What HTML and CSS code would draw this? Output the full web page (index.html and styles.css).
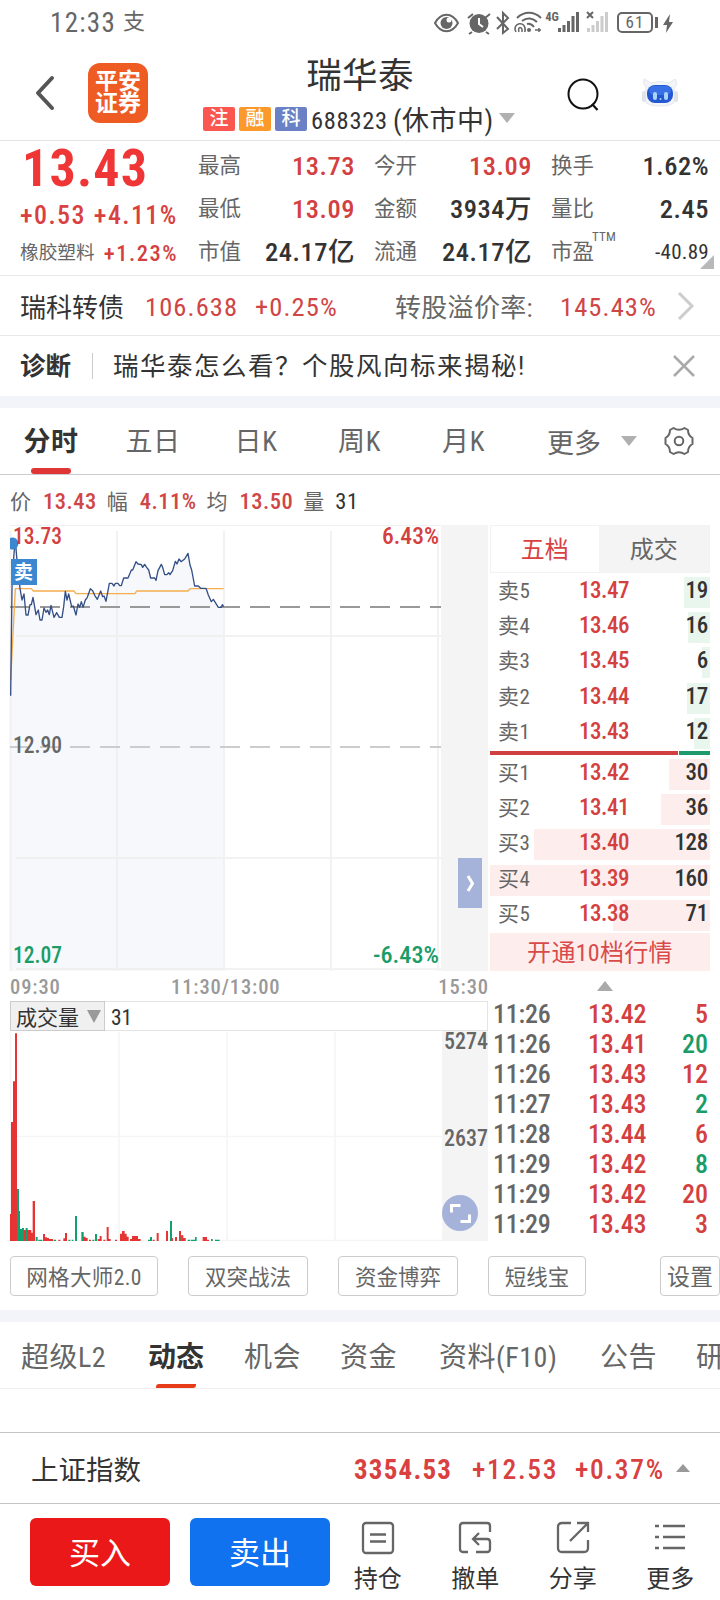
FILE: index.html
```html
<!DOCTYPE html>
<html lang="zh-CN">
<head>
    <meta charset="UTF-8">
    <meta name="viewport" content="width=device-width, initial-scale=1.0">
    <title>瑞华泰 688323</title>
    <link rel="stylesheet" href="styles.css">
</head>
<body>
<div class="page">

    <div class="status">
        <span class="clock">12:33</span>
        <span class="pay">支</span>
        <svg class="status-icons" width="250" height="46" viewBox="0 0 250 46">
            <g fill="none" stroke="#666" stroke-width="2">
                <path d="M5 23C11 12 22 12 28 23C22 34 11 34 5 23Z"/>
                <path d="M60 14l-5 4M38 18l5-4M42 32l-3 2M56 32l3 2"/>
                <path d="M67 17l11 12-5 4V13l5 5-11 11"/>
                <path d="M87 18C94 11 104 11 111 18M92 21C97 17 103 18 107 22"/>
                <path d="M86 32C81 23 97 19 95 32M89 32C87 26 93 26 92 32" stroke-width="1.5"/>
                <path d="M97 24Q101 23 104 27" />
                <path d="M105 30h6M109 28v4" stroke-width="1.5"/>
                <rect x="188" y="13" width="34" height="19" rx="4"/>
                <path d="M226.500 17v11" stroke-width="3"/>
                <path d="M157 12l6 6M163 12l-6 6"/>
            </g>
            <g fill="#666">
                <circle cx="16.500" cy="23" r="6"/>
                <circle cx="49" cy="23.500" r="9.500"/>
                <circle cx="99" cy="30" r="2"/>
                <path d="M128 28h3v4h-3zM132.500 25h3v7h-3zM137 21h3v11h-3zM141.500 16h3v16h-3zM146 12h3v20h-3z"/>
                <path d="M240 14l-7 11h4l-1 8 7-11h-4z"/>
            </g>
            <path fill="#ccc" d="M157 28h3v4h-3zM161.500 25h3v7h-3zM166 21h3v11h-3zM170.500 16h3v16h-3zM175 12h3v20h-3z"/>
            <circle cx="19" cy="20" r="2.500" fill="#fff"/>
            <path d="M49 18v6l4 3" fill="none" stroke="#fff" stroke-width="2"/>
            <text class="net" x="122" y="21">4G</text>
            <text class="battery" x="205" y="28">61</text>
        </svg>
    </div>

    <div class="header">
        <svg class="back" width="22" height="38" viewBox="0 0 22 38"><path d="M18 4L4 19l14 15" fill="none" stroke="#555" stroke-width="4" stroke-linecap="round" stroke-linejoin="round"/></svg>
        <div class="logo"><span>平安</span><span>证券</span></div>
        <div class="title">
            <div class="name">瑞华泰</div>
            <div class="code">
                <span class="tag tag-reg">注</span>
                <span class="tag tag-margin">融</span>
                <span class="tag tag-sci">科</span>
                <span class="num">688323</span>
                <span class="state">(休市中)</span>
                <i class="down"></i>
            </div>
        </div>
        <svg class="search" width="34" height="36" viewBox="0 0 34 36"><circle cx="16" cy="16" r="14.500" fill="none" stroke="#111" stroke-width="2"/><path d="M25 26l5.500 6" stroke="#111" stroke-width="2.200"/></svg>
        <svg class="robot" width="38" height="32" viewBox="0 0 38 32">
            <path d="M5 10Q1 7 3 2L10 6Q19 3 28 6L34 2Q38 8 33 11L34 24Q32 29 19 29T4 24Z" fill="#f3f4f7" stroke="#e6e8ed"/>
            <rect x="1" y="14" width="4" height="11" rx="2" fill="#e0e3ea"/><rect x="33" y="14" width="4" height="11" rx="2" fill="#e0e3ea"/>
            <rect x="6" y="8" width="26" height="18" rx="8" fill="#2458d3"/>
            <rect x="8" y="9" width="22" height="9" rx="5" fill="#3a70e6"/>
            <rect x="12" y="15" width="4" height="8" rx="2" fill="#a9d4fb"/><rect x="23" y="15" width="4" height="8" rx="2" fill="#a9d4fb"/><circle cx="19.500" cy="22" r="1" fill="#a9d4fb"/>
        </svg>
    </div>

    <div class="quote">
        <div class="last">
            <div class="price">13.43</div>
            <div class="change"><span>+0.53</span><span>+4.11%</span></div>
            <div class="sector"><span>橡胶塑料</span><b>+1.23%</b></div>
        </div>
        <dl class="stats">
            <dt>最高</dt><dd class="red">13.73</dd><dt>今开</dt><dd class="red">13.09</dd><dt>换手</dt><dd>1.62%</dd>
            <dt>最低</dt><dd class="red">13.09</dd><dt>金额</dt><dd>3934万</dd><dt>量比</dt><dd>2.45</dd>
            <dt>市值</dt><dd>24.17亿</dd><dt>流通</dt><dd>24.17亿</dd><dt>市盈<sup>TTM</sup></dt><dd class="small">-40.89</dd>
        </dl>
        <i class="corner"></i>
    </div>

    <div class="bond">
        <span class="bond-name">瑞科转债</span>
        <span class="bond-num">106.638</span>
        <span class="bond-num">+0.25%</span>
        <span class="bond-label">转股溢价率:</span>
        <span class="bond-num">145.43%</span>
        <svg width="18" height="30" viewBox="0 0 18 30"><path d="M2 2l13 13L2 28" fill="none" stroke="#ccc" stroke-width="3"/></svg>
    </div>

    <div class="tip">
        <b>诊断</b>
        <span class="tip-text">瑞华泰怎么看？个股风向标来揭秘!</span>
        <svg width="22" height="22" viewBox="0 0 22 22"><path d="M1 1l20 20M21 1L1 21" stroke="#aaa" stroke-width="2.500"/></svg>
    </div>

    <div class="band"></div>

    <div class="tabs">
        <span class="tab active">分时</span>
        <span class="tab">五日</span>
        <span class="tab">日K</span>
        <span class="tab">周K</span>
        <span class="tab">月K</span>
        <span class="tab-more">更多 <i class="down"></i></span>
        <svg width="30" height="30" viewBox="0 0 30 30"><g fill="none" stroke="#666" stroke-width="2"><path d="M9.500 2Q15 5.500 20.500 2L24 4Q24 9.500 28.500 12V18Q24 20.500 24 26L20.500 28Q15 24.500 9.500 28L6 26Q6 20.500 1.500 18V12Q6 9.500 6 4Z" stroke-linejoin="round"/><circle cx="15" cy="15" r="4.300"/></g></svg>
    </div>

    <div class="info">
        <span>价</span><b>13.43</b><span>幅</span><b>4.11%</b><span>均</span><b>13.50</b><span>量</span><b class="dark">31</b>
    </div>

    <div class="board">
        <div class="charts">
            <svg class="trend" width="478" height="446" viewBox="0 0 478 446">
                <rect x="431" width="47" height="446" fill="#f4f4f4"/>
                <path d="M0 .5h431" stroke="#f0f0f0"/>
                <g transform="translate(-10 -5) scale(.33333)" fill="none" stroke-width="3.500">
                    <path fill="#f6f8fb" d="M32 527L36 200 42 100 46 60 50 110 60 205 66 240 72 222 78 285 84 285 90 254 99 232 108 284 115 270 120 300 126 300 132 264 148 284 153 256 162 292 170 278 178 292 186 292 196 214 206 222 215 260 228 285 234 252 249 262 271 206 292 238 302 213 318 244 328 190 364 197 371 174 384 174 408 125 434 133 446 150 452 174 468 181 474 152 484 133 494 164 518 152 526 124 564 100 584 198 618 205 634 245 655 262 671 260V1353H32Z"/>
                </g>
                <path d="M.5 6v440M107 6v440M214 6v440M321 6v440M428 6v440M6 111h425M6 333h425M6 444h425" stroke="#eee" stroke-width="2" opacity=".75"/>
                <path d="M0 82h431" stroke="#999" stroke-width="2" stroke-dasharray="20 10"/>
                <path d="M0 222h431" stroke="#ccc" stroke-width="2" stroke-dasharray="20 10"/>
                <g transform="translate(-10 -5) scale(.33333)" fill="none" stroke-width="4" stroke-linejoin="round">
                    <path stroke="#f5ad4e" d="M32 480L46 206H94L100 213H222L228 221H405L410 213H564L570 206H671"/>
                    <path stroke="#344f86" d="M32 527L36 200 42 100 46 60 50 110 60 205 66 240 72 222 78 285 84 285 90 254 94 254 99 232 108 284 115 270 120 300 126 300 132 264 138 277 143 270 148 284 153 256 162 292 170 278 178 292 186 292 191 260 196 214 201 240 206 222 215 260 220 258 228 285 234 252 239 262 244 245 249 262 256 240 262 232 271 206 278 212 284 226 292 238 302 213 308 230 312 228 318 244 328 190 336 190 342 198 346 190 354 190 359 197 364 197 371 174 384 174 390 160 394 150 398 150 408 125 414 132 424 134 428 142 434 133 440 142 446 150 452 174 464 174 468 181 474 152 484 133 488 142 494 164 500 164 506 158 510 164 518 152 526 124 531 132 537 117 543 125 554 117 564 100 570 135 575 150 584 198 595 198 602 205 618 205 625 225 634 245 640 238 655 262 664 262 667 254 671 260"/>
                </g>
                <path d="M0 13a6 6 0 1 1 0 11z" fill="#3b87d0"/>
                <rect x="1" y="34" width="26" height="26" fill="#3b87d0"/>
                <text class="sell-mark" x="4" y="54">卖</text>
                <text class="axis red" x="3" y="19" textLength="49" lengthAdjust="spacingAndGlyphs">13.73</text>
                <text class="axis red" x="372" y="19" textLength="57" lengthAdjust="spacingAndGlyphs">6.43%</text>
                <text class="axis" x="3" y="228" textLength="49" lengthAdjust="spacingAndGlyphs">12.90</text>
                <text class="axis green" x="3" y="438" textLength="49" lengthAdjust="spacingAndGlyphs">12.07</text>
                <text class="axis green" x="363" y="438" textLength="66" lengthAdjust="spacingAndGlyphs">-6.43%</text>
                <rect x="448" y="333" width="24" height="50" fill="#a5b3da"/>
                <path d="M458 351l4.500 7.500-4.500 7.500" fill="none" stroke="#fff" stroke-width="3"/>
            </svg>
            <div class="times"><span>09:30</span><span>11:30/13:00</span><span>15:30</span></div>
            <div class="vol-head"><span class="vol-name">成交量 <i class="down"></i></span><span class="vol-now">31</span></div>
            <svg class="volume" width="478" height="210" viewBox="0 0 478 210">
                <rect x="432" width="46" height="210" fill="#f4f4f4"/>
                <path d="M.5 1v209M109 1v209M217 1v209M325 1v209M0 105.500h432M0 209.500h432" stroke="#f5f5f5" stroke-width="1.500"/>
                <g transform="translate(-10 -111) scale(.33333)">
                    <path fill="#e63434" d="M30 963V882H33V606H39V484H45V340H51V963ZM72 963V930H94V938H98V843H105V963ZM129 963V942H135V952H141V963ZM141 963V954H147V957H159V963ZM190 963V955H195V939H201V963ZM248 963V936H251V950H257V954H263V963ZM293 963V957H299V948H305V963ZM320 963V921H326V957H332V963ZM360 963V941H366V933H374V941H380V950H386V963ZM390 963V957H396V948H414V957H422V963ZM470 963V939H476V963ZM498 963V933H504V963ZM513 963V954H519V963ZM525 963V951H531V963ZM537 963V933H543V946H550V954H557V963ZM608 963V951H621V959H627V963ZM175 959h6v4h-6zM267 959h6v4h-6zM310 959h6v4h-6zM345 959h6v4h-6zM458 959h6v4h-6z"/>
                    <path fill="#12a06c" d="M51 963V807H57V873H60V927H66V924H72V963ZM77 963V924H83V963ZM107 963V951H113V963ZM161 959h7v4h-7zM205 959h6v4h-6zM225 963V888H231V963ZM244 963V936H249V963ZM285 963V942H291V963ZM450 963V951H456V963ZM510 963V903H516V963ZM542 963V951H546V963ZM563 959h8v4h-8zM585 963V951H590V963ZM573 959h12v4h-12zM633 957h5v6h-5zM645 959h14v4h-14zM115 959h12v4h-12zM215 959h5v4h-5zM277 959h6v4h-6zM444 959h6v4h-6z"/>
                </g>
                <text class="axis" x="434" y="18" textLength="44" lengthAdjust="spacingAndGlyphs">5274</text>
                <text class="axis" x="434" y="115" textLength="44" lengthAdjust="spacingAndGlyphs">2637</text>
                <circle cx="450" cy="182" r="18" fill="#a5b3da"/>
                <path d="M441.500 181.500v-7h9M459.500 183.500v7h-9" fill="none" stroke="#fff" stroke-width="3"/>
            </svg>
        </div>

        <div class="side">
            <div class="side-tabs"><span class="on">五档</span><span>成交</span></div>
            <div class="book">
                <div class="row sell"><i style="width:26px"></i><span>卖5</span><b>13.47</b><em>19</em></div>
                <div class="row sell"><i style="width:22px"></i><span>卖4</span><b>13.46</b><em>16</em></div>
                <div class="row sell"><i style="width:8px"></i><span>卖3</span><b>13.45</b><em>6</em></div>
                <div class="row sell"><i style="width:23px"></i><span>卖2</span><b>13.44</b><em>17</em></div>
                <div class="row sell"><i style="width:16px"></i><span>卖1</span><b>13.43</b><em>12</em></div>
            </div>
            <div class="ratio"><i></i><i></i></div>
            <div class="book">
                <div class="row"><i style="width:41px"></i><span>买1</span><b>13.42</b><em>30</em></div>
                <div class="row"><i style="width:49px"></i><span>买2</span><b>13.41</b><em>36</em></div>
                <div class="row"><i style="width:176px"></i><span>买3</span><b>13.40</b><em>128</em></div>
                <div class="row"><i style="width:220px"></i><span>买4</span><b>13.39</b><em>160</em></div>
                <div class="row"><i style="width:97px"></i><span>买5</span><b>13.38</b><em>71</em></div>
            </div>
            <div class="open">开通10档行情</div>
            <div class="fold"><i class="up"></i></div>
            <div class="ticks">
                <div><span>11:26</span><b>13.42</b><em class="red">5</em></div>
                <div><span>11:26</span><b>13.41</b><em class="green">20</em></div>
                <div><span>11:26</span><b>13.43</b><em class="red">12</em></div>
                <div><span>11:27</span><b>13.43</b><em class="green">2</em></div>
                <div><span>11:28</span><b>13.44</b><em class="red">6</em></div>
                <div><span>11:29</span><b>13.42</b><em class="green">8</em></div>
                <div><span>11:29</span><b>13.42</b><em class="red">20</em></div>
                <div><span>11:29</span><b>13.43</b><em class="red">3</em></div>
            </div>
        </div>
    </div>

    <div class="tools">
        <button class="w1">网格大师2.0</button>
        <button class="w2">双突战法</button>
        <button class="w2">资金博弈</button>
        <button class="w3">短线宝</button>
        <button class="set">设置</button>
    </div>

    <div class="band"></div>

    <div class="news-tabs">
        <span>超级L2</span>
        <span class="active">动态</span>
        <span>机会</span>
        <span>资金</span>
        <span>资料(F10)</span>
        <span>公告</span>
        <span>研</span>
    </div>
    <div class="blank"></div>

    <div class="index">
        <span class="index-name">上证指数</span>
        <b>3354.53</b>
        <span class="index-num">+12.53</span>
        <span class="index-num">+0.37%</span>
        <i class="up"></i>
    </div>

    <div class="bottom">
        <button class="buy">买入</button>
        <button class="sell-btn">卖出</button>
        <div class="nav">
            <div>
                <svg width="34" height="34" viewBox="0 0 34 34"><rect x="2" y="2" width="30" height="30" rx="3"/><path d="M9 13.500h16M9 20.500h16"/></svg>
                <span>持仓</span>
            </div>
            <div>
                <svg width="34" height="34" viewBox="0 0 34 34"><path d="M10 31H5Q2 31 2 28V5Q2 2 5 2H29Q32 2 32 5V11M16 18H29Q32 18 32 21V28Q32 31 29 31H18M21 12l-6 6 6 6"/></svg>
                <span>撤单</span>
            </div>
            <div>
                <svg width="34" height="34" viewBox="0 0 34 34"><path d="M15 2H6Q2 2 2 6V27Q2 31 6 31H28Q32 31 32 27V19M21 2H32V11M32 2L14 20"/></svg>
                <span>分享</span>
            </div>
            <div>
                <svg width="34" height="34" viewBox="0 0 34 34"><path d="M2 5h4M10 5h22M2 16h4M10 16h22M2 27h4M10 27h22"/></svg>
                <span>更多</span>
            </div>
        </div>
    </div>

</div>
</body>
</html>
```
FILE: styles.css
```css
*{
    box-sizing: border-box;
}

body{
    margin: 0;
    background-color: white;
    color: #333;
    font-family: Roboto, "Noto Sans CJK SC", sans-serif;
    font-stretch: 75%;
}

b, em, i{
    font-style: normal;
}

button{
    font-family: inherit;
    font-stretch: 75%;
    padding: 0;
}

.page{
    width: 720px;
    height: 1600px;
    overflow: hidden;
}

.red{
    color: #d43f3f;
    fill: #d43f3f;
}

.green{
    color: #1a9c68;
    fill: #1a9c68;
}

.down, .up{
    display: inline-block;
    border: 8px solid transparent;
    border-bottom: 0;
    border-top: 10px solid #b0b0b0;
}

.up{
    border-top: 0;
    border-bottom: 10px solid #aaa;
}

/* status bar */
.status{
    height: 46px;
    padding-left: 50px;
    display: flex;
    align-items: center;
    color: #666;
}

.clock{
    font-size: 27px;
    letter-spacing: 1.300px;
    width: 73px;
}

.pay{
    font-size: 22px;
    line-height: 40px;
    padding-bottom: 3px;
}

.status-icons{
    margin-left: auto;
    margin-right: 40px;
}

.net{
    font-size: 12.500px;
    font-weight: bold;
}

.net, .battery{
    fill: #666;
    text-anchor: middle;
}

.battery{
    font-size: 17px;
    letter-spacing: 1px;
}

/* header */
.header{
    height: 95px;
    display: flex;
    border-bottom: 1px solid #e4e4e4;
}

.back{
    margin: 28px 0 0 34px;
}

.logo{
    width: 60px;
    height: 60px;
    margin: 17px 0 0 32px;
    border-radius: 12px;
    background-color: #ee5c24;
    color: white;
    font-size: 23px;
    line-height: 22px;
    font-weight: bold;
    display: flex;
    flex-direction: column;
    align-items: center;
    justify-content: center;
}

.title{
    width: 316px;
    margin-left: 54px;
}

.name{
    font-size: 35.500px;
    line-height: 56px;
    height: 56px;
    text-align: center;
    padding-top: 2px;
    letter-spacing: .300px;
}

.code{
    display: flex;
    align-items: center;
    height: 32px;
    margin-left: 1px;
}

.tag{
    width: 32px;
    height: 24px;
    margin: 1px 4px 0 0;
    border-radius: 2px;
    color: white;
    font-size: 19px;
    line-height: 23px;
    text-align: center;
    font-weight: 500;
}

.tag-reg{
    background-color: #fb5750;
}

.tag-margin{
    background-color: #fb9a2b;
}

.tag-sci{
    background-color: #6a82c5;
}

.num{
    font-size: 24.500px;
    letter-spacing: .700px;
    padding-top: 4px;
    width: 82px;
}

.state{
    font-size: 27px;
    letter-spacing: .500px;
    padding-top: 1px;
    width: 106px;
}

.search{
    margin: 32px 0 0 49px;
}

.robot{
    margin: 31px 0 0 40px;
}

/* quote */
.quote{
    height: 135px;
    display: flex;
    position: relative;
    border-bottom: 1px solid #e8e8e8;
}

.last{
    width: 198px;
    padding-left: 20px;
    color: #e03c3c;
    white-space: nowrap;
}

.price{
    font-size: 52px;
    line-height: 54px;
    height: 54px;
    padding: 1px 0 0 2px;
    letter-spacing: 1.200px;
    font-weight: bold;
    color: #ef3535;
}

.change{
    display: flex;
    gap: 8px;
    padding-top: 2px;
    font-size: 26px;
    line-height: 37px;
    letter-spacing: 1.400px;
    font-weight: 500;
    color: #d94141;
}

.sector{
    display: flex;
    gap: 9px;
    font-size: 18.700px;
    line-height: 38px;
    color: #666;
}

.sector b{
    font-size: 22.500px;
    letter-spacing: 1.500px;
    font-weight: 500;
    color: #d43f3f;
}

.stats{
    margin: 0;
    padding-top: 3px;
    display: grid;
    grid-template-columns: 56px 101px 76px 101px 76px 101px;
    grid-template-rows: 43px 43px 43px;
    line-height: 43px;
}

.stats dt{
    font-size: 21.500px;
    color: #666;
    white-space: nowrap;
}

.stats dt:nth-of-type(3n+2), .stats dt:nth-of-type(3n){
    padding-left: 19px;
}

.stats dd{
    margin: 0;
    text-align: right;
    font-size: 26.500px;
    letter-spacing: .500px;
    font-weight: 500;
}

.stats .small{
    font-size: 21px;
    letter-spacing: .300px;
    font-weight: 400;
    padding-top: 1px;
}

.stats sup{
    font-size: 13px;
    letter-spacing: .200px;
    line-height: 0;
    vertical-align: 18px;
    margin-left: -2px;
}

.corner{
    position: absolute;
    right: 6px;
    bottom: 6px;
    border-left: 14px solid transparent;
    border-bottom: 14px solid #b8b8b8;
}

/* bond + tip */
.bond{
    height: 60px;
    display: flex;
    align-items: center;
    padding-left: 20px;
    border-bottom: 1px solid #e8e8e8;
}

.bond-name{
    font-size: 26px;
    width: 125px;
}

.bond-num{
    font-size: 26.500px;
    letter-spacing: 1.100px;
    color: #d04545;
    width: 110px;
    padding-top: 2px;
}

.bond-label{
    font-size: 26px;
    letter-spacing: .300px;
    color: #666;
    width: 165px;
    margin-left: 30px;
    white-space: nowrap;
}

.bond svg{
    margin-left: 7px;
}

.tip{
    height: 60px;
    display: flex;
    align-items: center;
    padding-left: 20px;
    font-size: 25.500px;
}

.tip b{
    padding-bottom: 5px;
}

.tip-text{
    flex: 1;
    margin-left: 21px;
    padding-left: 20px;
    border-left: 1px solid #ccc;
    line-height: 26px;
    letter-spacing: 1.500px;
}

.tip svg{
    margin-right: 25px;
}

.band{
    height: 12px;
    background-color: #f3f4f9;
}

/* period tabs */
.tabs{
    height: 67px;
    display: grid;
    grid-template-columns: 102px 102px 104px 103px 105px 148px 30px;
    align-items: center;
    border-bottom: 1px solid #ccc;
    font-size: 27px;
    color: #666;
}

.tab{
    height: 66px;
    line-height: 69px;
    text-align: center;
    letter-spacing: .600px;
    position: relative;
}

.tabs .active{
    font-weight: bold;
    color: #333;
}

.tab.active::after{
    content: "";
    position: absolute;
    left: 31px;
    bottom: 0;
    width: 40px;
    height: 6px;
    border-radius: 3px;
    background-color: #e03535;
}

.tab-more{
    padding-left: 31px;
    display: flex;
    align-items: center;
    gap: 20px;
}

.info{
    height: 50px;
    padding-left: 10px;
    display: flex;
    align-items: center;
    font-size: 21px;
    color: #666;
}

.info b{
    font-size: 22.500px;
    letter-spacing: .500px;
    font-weight: 500;
    color: #d04545;
    margin: 2px 10px 0 12px;
}

.info .dark{
    margin-left: 11px;
    font-weight: 400;
    color: #333;
}

/* board */
.board{
    display: flex;
    gap: 2px;
    padding-left: 10px;
    height: 716px;
}

.charts{
    width: 478px;
}

.charts svg{
    display: block;
    overflow: visible;
}

.axis{
    font-size: 23px;
    font-weight: 500;
}

.axis:not(.red):not(.green){
    fill: #666;
}

.sell-mark{
    font-size: 19px;
    font-weight: bold;
    fill: white;
}

.times{
    height: 30px;
    line-height: 32px;
    display: grid;
    grid-template-columns: 161px 1fr auto;
    font-size: 20.500px;
    letter-spacing: .900px;
    font-weight: 500;
    color: #999;
}

.times span:last-child{
    margin-right: -1px;
}

.vol-head{
    height: 30px;
    display: flex;
    align-items: center;
    border: 1px solid #e4e4e4;
}

.vol-name{
    width: 95px;
    height: 30px;
    margin-left: -1px;
    padding-left: 5px;
    display: flex;
    align-items: center;
    gap: 8px;
    background-color: #f0f0f0;
    border: 1px solid #ccc;
    font-size: 21px;
}

.vol-name .down{
    border-width: 13px 7px 0;
    border-top-color: #999;
}

.vol-now{
    font-size: 21.500px;
    margin: 2px 0 0 6px;
}

.side{
    width: 220px;
}

.side-tabs{
    height: 48px;
    display: flex;
    line-height: 48px;
    font-size: 24px;
    text-align: center;
    color: #666;
    border: 1px solid #f2f2f2;
}

.side-tabs span{
    width: 111px;
    height: 46px;
    background-color: #f4f4f4;
}

.side-tabs .on{
    width: 108px;
    background-color: white;
    color: #d94141;
}

.book{
    height: 176px;
    margin-top: 2px;
    padding-top: 2px;
}

.row{
    height: 31px;
    margin-bottom: 4.200px;
    display: grid;
    grid-template-columns: 80px 60px 1fr;
    padding: 0 2px 0 9px;
    line-height: 28px;
    position: relative;
}

.row i{
    position: absolute;
    top: 0;
    right: 0;
    height: 31px;
    background-color: #fdeeed;
}

.sell i{
    background-color: #e9f6ee;
}

.row span, .row b, .row em{
    position: relative;
}

.row span{
    font-size: 21px;
    letter-spacing: .400px;
    color: #666;
    margin-left: -1px;
}

.row b{
    font-size: 23px;
    letter-spacing: -.500px;
    font-weight: 500;
    color: #d43f3f;
}

.row em{
    font-size: 23px;
    letter-spacing: -.300px;
    font-weight: 500;
    text-align: right;
}

.ratio{
    height: 4px;
    display: flex;
    gap: 1px;
}

.ratio i{
    width: 188px;
    background-color: #d04040;
}

.ratio i + i{
    width: 31px;
    background-color: #1f9a6c;
}

.open{
    height: 38px;
    line-height: 41px;
    background-color: #fdeeed;
    color: #d94b4b;
    font-size: 24px;
    letter-spacing: .300px;
    text-align: center;
}

.fold{
    height: 28px;
    padding-top: 10px;
    display: flex;
    justify-content: center;
    align-items: flex-start;
    padding-left: 10px;
}

.ticks div{
    height: 30px;
    line-height: 30px;
    display: grid;
    grid-template-columns: 95px 60px 1fr;
    padding: 0 2px 0 3px;
    font-size: 26px;
}

.ticks span{
    color: #666;
    font-weight: 500;
    letter-spacing: -.200px;
}

.ticks b{
    font-weight: 500;
    letter-spacing: -.200px;
    color: #d43f3f;
}

.ticks em{
    font-weight: 500;
    text-align: right;
}

/* tool buttons */
.tools{
    height: 69px;
    padding: 15px 0 0 10px;
    display: flex;
    gap: 30px;
}

.tools button{
    height: 40px;
    border: 1px solid #ccc;
    border-radius: 4px;
    background-color: white;
    color: #666;
    font-size: 21.500px;
    padding-bottom: 2px;
}

.tools .w1{
    width: 148px;
    letter-spacing: .400px;
}

.w2{
    width: 120px;
}

.w3{
    width: 98px;
}

.tools .set{
    width: 60px;
    margin-left: 44px;
    font-size: 23px;
    flex-shrink: 0;
}

.news-tabs{
    height: 67px;
    padding-left: 21px;
    display: grid;
    grid-template-columns: 127px 96px 96px 99px 161px 96px 60px;
    line-height: 71px;
    font-size: 28px;
    color: #666;
    white-space: nowrap;
    border-bottom: 1px solid #eee;
}

.news-tabs span{
    height: 66px;
    letter-spacing: .500px;
}

.news-tabs .active{
    color: #333;
    font-weight: bold;
    letter-spacing: 0;
    position: relative;
}

.news-tabs .active::after{
    content: "";
    position: absolute;
    left: 8px;
    bottom: 0;
    width: 40px;
    height: 4px;
    border-radius: 3px 0 3px 0;
    background-color: #e63c17;
}

.blank{
    height: 43px;
}

/* index bar */
.index{
    height: 72px;
    display: flex;
    align-items: center;
    padding-left: 31px;
    border-top: 1px solid #c4c4c4;
    border-bottom: 1px solid #c4c4c4;
    font-size: 27px;
    letter-spacing: 1.200px;
    color: #d94141;
}

.index-name{
    width: 323px;
    font-size: 27.500px;
    letter-spacing: 0;
    color: #333;
}

.index b{
    width: 118px;
    padding-top: 3px;
}

.index-num{
    width: 103px;
    padding-top: 3px;
    font-size: 27.500px;
    font-weight: 500;
    letter-spacing: 1.700px;
}

.index .up{
    margin-left: -2px;
    border-width: 0 7px 8px;
    border-bottom-color: #999;
}

/* bottom bar */
.bottom{
    height: 96px;
    display: flex;
    padding: 14px 0 0 30px;
    gap: 20px;
}

.bottom button{
    width: 140px;
    height: 68px;
    border: 0;
    border-radius: 6px;
    color: white;
    font-size: 31px;
    padding-bottom: 3px;
}

.buy{
    background-color: #ea1818;
}

.sell-btn{
    background-color: #1072ee;
}

.nav{
    display: flex;
    margin-left: -21px;
}

.nav div{
    width: 97.500px;
    display: flex;
    flex-direction: column;
    align-items: center;
}

.nav svg{
    margin-top: 3px;
    flex-shrink: 0;
    fill: none;
    stroke: #666;
    stroke-width: 2.300;
}

.nav span{
    font-size: 24px;
    line-height: 48px;
}
```
